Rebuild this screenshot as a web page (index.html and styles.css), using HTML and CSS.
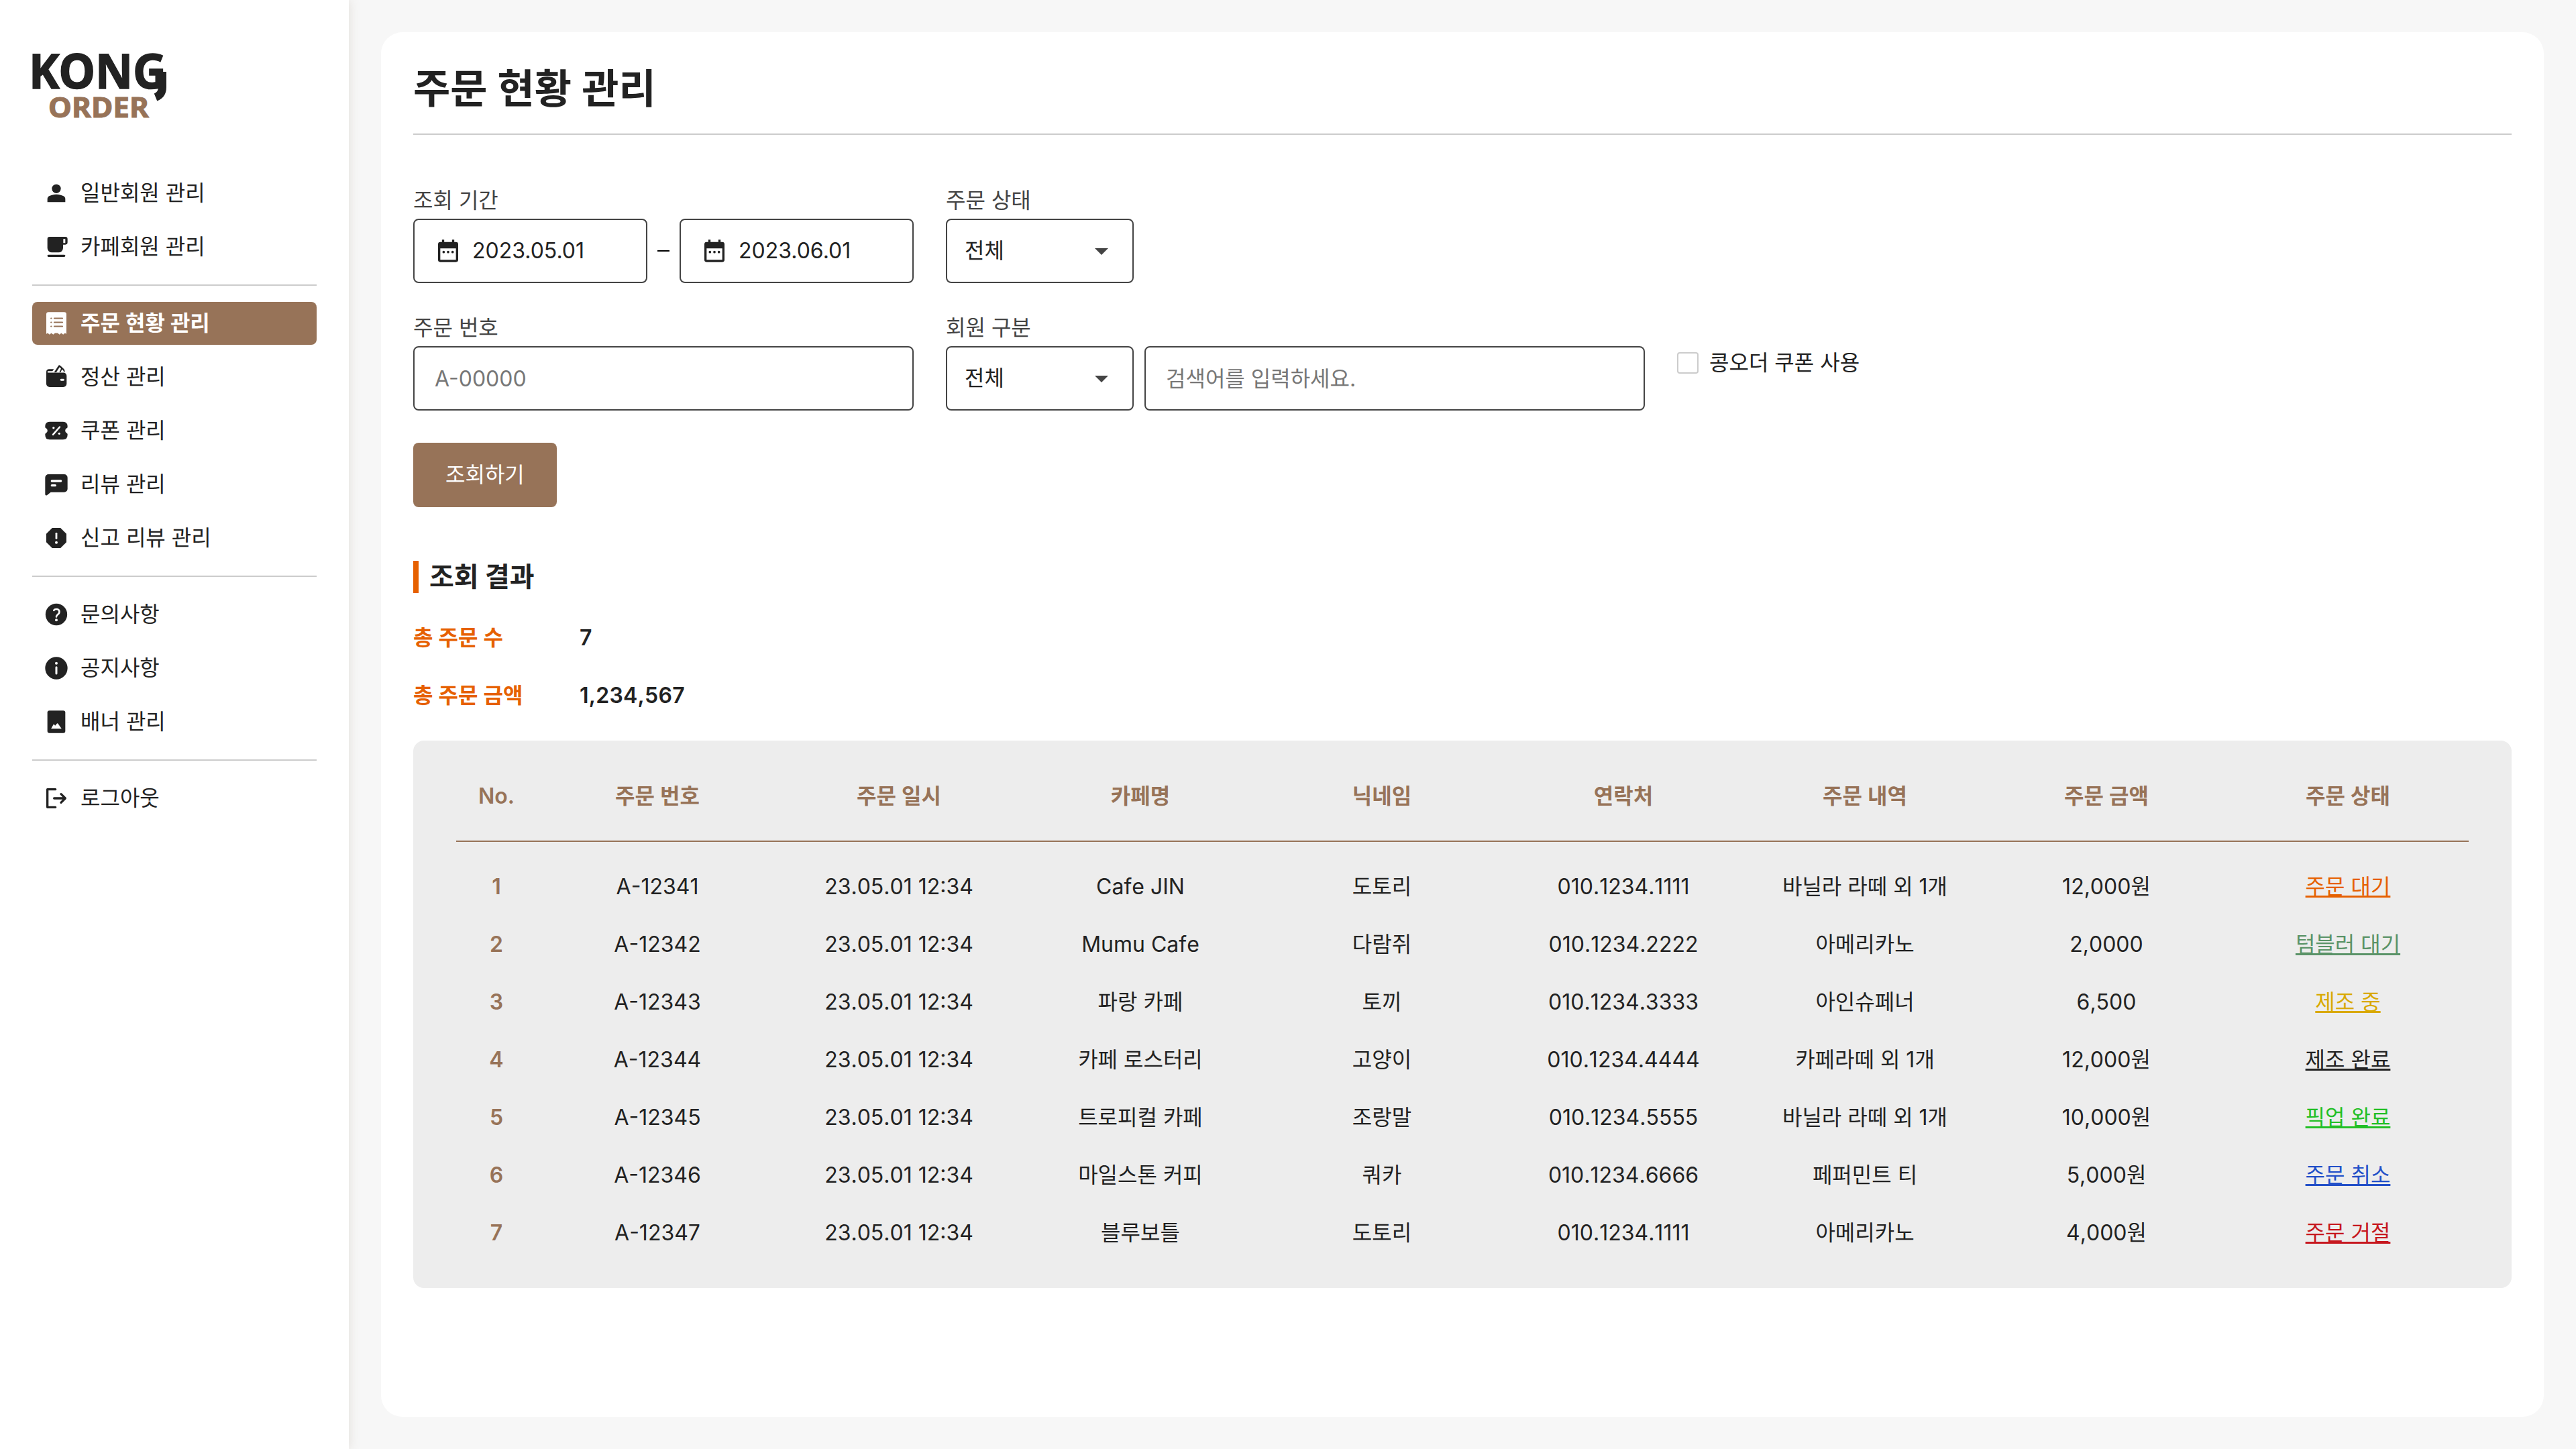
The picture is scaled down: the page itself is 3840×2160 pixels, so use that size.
FILE: index.html
```html
<!DOCTYPE html>
<html lang="ko">
<head>
  <meta charset="UTF-8" />
  <meta name="viewport" content="width=device-width, initial-scale=1.0"/>
  <title>KONG ORDER - 주문 현황 관리</title>
  <link rel="stylesheet" href="styles.css">
</head>
<body>
  <aside class="sidebar">
    <svg class="logo" viewBox="0 0 204 100" role="img" aria-label="KONG ORDER">
      <text class="logo-kong" x="-5" y="52" textLength="205" lengthAdjust="spacingAndGlyphs">KONG</text>
      <path class="logo-tail" d="M194 27v23q0 11-10 15"/>
      <text class="logo-order" x="24" y="95" textLength="150" lengthAdjust="spacingAndGlyphs">ORDER</text>
    </svg>

    <nav>
      <ul class="menu">
        <li><a href="#">
          <svg class="icon" viewBox="0 0 24 24"><circle cx="12" cy="8" r="4"/><path d="M4 20v-2.800c0-1.100.6-2.100 1.600-2.650C7.600 13.500 9.800 13 12 13s4.400.5 6.400 1.550c1 .55 1.600 1.550 1.600 2.650V20z"/></svg>
          일반회원 관리</a></li>
        <li><a href="#">
          <svg class="icon" viewBox="0 0 24 24"><path fill-rule="evenodd" d="M8 17a4 4 0 0 1-4-4V5a2 2 0 0 1 2-2h14a2 2 0 0 1 2 2v3a2 2 0 0 1-2 2h-2v3a4 4 0 0 1-4 4zM18.200 8.500H20V5h-1.800z"/><rect x="4" y="19" width="16" height="2" rx="1"/></svg>
          카페회원 관리</a></li>
      </ul>
      <ul class="menu">
        <li><a class="active" href="#">
          <svg class="icon" viewBox="0 0 24 24"><path d="M3 4a2 2 0 0 1 2-2h14a2 2 0 0 1 2 2v17.500l-1.300-.8-1.600 1.300-1.700-1.300-1.600 1.300-1.600-1.300-2.400 0-1.600 1.300-1.700-1.300-1.600 1.300-1.600-1.300-1.300.8z"/><path class="cut" d="M10.200 7.500h7.200M10.200 11.100h7.200M10.200 14.700h7.200M7.300 7.500h.2M7.300 11.100h.2M7.300 14.700h.2" stroke-width="1.300"/></svg>
          주문 현황 관리</a></li>
        <li><a href="#">
          <svg class="icon" viewBox="0 0 24 24"><path d="M3 7.200v10.800a3 3 0 0 0 3 3h12.200a3 3 0 0 0 3-3v-7a3 3 0 0 0-2.700-2.900H4.500A.8.8 0 0 1 4.500 6.700h4L9.800 5H5.500A2.500 2.500 0 0 0 3 7.200zM10 7.800 14 1.700q.6-.7 1.300-.1l1.400 1.300 2.300 2.200q.7.8.4 2.700h-.8q.2-1.300-.7-2l-.8-.7-1.300 2.700h-1.200L16.200 4.500l-1.300-1.300-3 4.600z"/><rect class="hole" x="15.500" y="13.700" width="3.600" height="1.700" rx=".85"/></svg>
          정산 관리</a></li>
        <li><a href="#">
          <svg class="icon" viewBox="0 0 24 24"><path d="M6 4h12q4 0 4 4.200v.7q0 .5-.5.7a2.600 2.600 0 0 0 0 4.800q.5.200.5.700v.700q0 4.200-4 4.200H6q-4 0-4-4.200v-.7q0-.5.500-.7a2.600 2.600 0 0 0 0-4.800Q2 9.400 2 8.900v-.7Q2 4 6 4z"/><path class="cut" d="M9 15.500l6-6.800" stroke-width="1.500"/><circle class="hole" cx="9.500" cy="9.500" r="1"/><circle class="hole" cx="14.600" cy="14.600" r="1"/></svg>
          쿠폰 관리</a></li>
        <li><a href="#">
          <svg class="icon" viewBox="0 0 24 24"><path d="M5 3h14a3 3 0 0 1 3 3v10a3 3 0 0 1-3 3H7l-3.400 2.700Q2 22.500 2 20.700V6a3 3 0 0 1 3-3z"/><path class="cut" d="M8 9h8M8 13h3" stroke-width="2"/></svg>
          리뷰 관리</a></li>
        <li><a href="#">
          <svg class="icon" viewBox="0 0 24 24"><path d="M8.300 3h7.400L21 8.300v7.400L15.700 21H8.300L3 15.700V8.300z"/><path class="cut" d="M12 8v4.200" stroke-width="1.700"/><circle class="hole" cx="12" cy="16" r="1.200"/></svg>
          신고 리뷰 관리</a></li>
      </ul>
      <ul class="menu">
        <li><a href="#">
          <svg class="icon" viewBox="0 0 24 24"><circle cx="12" cy="12" r="9.700"/><path class="cut" d="M9.800 8.300Q10.500 7.200 12 7.200q2.700 0 2.700 2.500 0 1.200-1.400 2.300T12 14" stroke-width="1.600"/><circle class="hole" cx="12" cy="17" r="1.200"/></svg>
          문의사항</a></li>
        <li><a href="#">
          <svg class="icon" viewBox="0 0 24 24"><circle cx="12" cy="12" r="10"/><path class="cut" d="M12 11.200v5.600" stroke-width="1.800"/><circle class="hole" cx="12" cy="7.700" r="1.200"/></svg>
          공지사항</a></li>
        <li><a href="#">
          <svg class="icon" viewBox="0 0 24 24"><rect x="4" y="2" width="16" height="20" rx="1.800"/><path class="hole" d="M7.300 18.200l2-3.700q.4-.7.900 0l.7.900 1.700-1.900q.5-.5.900.2l3.200 4.500z"/></svg>
          배너 관리</a></li>
      </ul>
      <ul class="menu">
        <li><a href="#">
          <svg class="icon line" viewBox="0 0 24 24"><path d="M11.200 4H4v16h7.200M10 12h10M16.200 8.200 20 12l-3.800 3.800"/></svg>
          로그아웃</a></li>
      </ul>
    </nav>
  </aside>

  <main class="content">
    <section class="card">
      <h1>주문 현황 관리</h1>

      <form class="search">
        <div class="search-row">
          <div class="field">
            <label>조회 기간</label>
            <div class="period">
              <div class="box date">
                <svg class="icon" viewBox="0 0 24 24"><path fill-rule="evenodd" d="M6.500 2h2v2h7V2h2v2H19a2 2 0 0 1 2 2v14a2 2 0 0 1-2 2H5a2 2 0 0 1-2-2V6a2 2 0 0 1 2-2h1.500zM5 9.800V20h14V9.800z"/><circle cx="8" cy="13" r="1.100"/><circle cx="12" cy="13" r="1.100"/><circle cx="16" cy="13" r="1.100"/></svg>
                2023.05.01
              </div>
              <span class="dash"></span>
              <div class="box date">
                <svg class="icon" viewBox="0 0 24 24"><path fill-rule="evenodd" d="M6.500 2h2v2h7V2h2v2H19a2 2 0 0 1 2 2v14a2 2 0 0 1-2 2H5a2 2 0 0 1-2-2V6a2 2 0 0 1 2-2h1.500zM5 9.800V20h14V9.800z"/><circle cx="8" cy="13" r="1.100"/><circle cx="12" cy="13" r="1.100"/><circle cx="16" cy="13" r="1.100"/></svg>
                2023.06.01
              </div>
            </div>
          </div>
          <div class="field">
            <label>주문 상태</label>
            <div class="box select">전체 <svg class="arrow" viewBox="0 0 20 10"><path d="M0 0h20L10 10z"/></svg></div>
          </div>
        </div>

        <div class="search-row">
          <div class="field">
            <label>주문 번호</label>
            <input class="box text" type="text" placeholder="A-00000">
          </div>
          <div class="field">
            <label>회원 구분</label>
            <div class="member">
              <div class="box select">전체 <svg class="arrow" viewBox="0 0 20 10"><path d="M0 0h20L10 10z"/></svg></div>
              <input class="box text" type="text" placeholder="검색어를 입력하세요.">
            </div>
          </div>
          <div class="coupon">
            <span class="checkbox"></span>
            콩오더 쿠폰 사용
          </div>
        </div>

        <button class="search-button" type="button">조회하기</button>
      </form>

      <h2>조회 결과</h2>
      <dl class="summary">
        <dt>총 주문 수</dt>
        <dd>7</dd>
        <dt>총 주문 금액</dt>
        <dd>1,234,567</dd>
      </dl>

      <div class="orders">
        <div class="row head">
          <span>No.</span><span>주문 번호</span><span>주문 일시</span><span>카페명</span><span>닉네임</span><span>연락처</span><span>주문 내역</span><span>주문 금액</span><span>주문 상태</span>
        </div>
        <div class="row">
          <b>1</b><span>A-12341</span><span>23.05.01 12:34</span><span>Cafe JIN</span><span>도토리</span><span>010.1234.1111</span><span>바닐라 라떼 외 1개</span><span>12,000원</span><a class="wait" href="#">주문 대기</a>
        </div>
        <div class="row">
          <b>2</b><span>A-12342</span><span>23.05.01 12:34</span><span>Mumu Cafe</span><span>다람쥐</span><span>010.1234.2222</span><span>아메리카노</span><span>2,0000</span><a class="tumbler" href="#">텀블러 대기</a>
        </div>
        <div class="row">
          <b>3</b><span>A-12343</span><span>23.05.01 12:34</span><span>파랑 카페</span><span>토끼</span><span>010.1234.3333</span><span>아인슈페너</span><span>6,500</span><a class="making" href="#">제조 중</a>
        </div>
        <div class="row">
          <b>4</b><span>A-12344</span><span>23.05.01 12:34</span><span>카페 로스터리</span><span>고양이</span><span>010.1234.4444</span><span>카페라떼 외 1개</span><span>12,000원</span><a class="made" href="#">제조 완료</a>
        </div>
        <div class="row">
          <b>5</b><span>A-12345</span><span>23.05.01 12:34</span><span>트로피컬 카페</span><span>조랑말</span><span>010.1234.5555</span><span>바닐라 라떼 외 1개</span><span>10,000원</span><a class="pickup" href="#">픽업 완료</a>
        </div>
        <div class="row">
          <b>6</b><span>A-12346</span><span>23.05.01 12:34</span><span>마일스톤 커피</span><span>쿼카</span><span>010.1234.6666</span><span>페퍼민트 티</span><span>5,000원</span><a class="cancel" href="#">주문 취소</a>
        </div>
        <div class="row">
          <b>7</b><span>A-12347</span><span>23.05.01 12:34</span><span>블루보틀</span><span>도토리</span><span>010.1234.1111</span><span>아메리카노</span><span>4,000원</span><a class="reject" href="#">주문 거절</a>
        </div>
      </div>
    </section>
  </main>
</body>
</html>
```
FILE: styles.css
```css
* {
  box-sizing: border-box;
  margin: 0;
  padding: 0;
}

body {
  display: flex;
  height: 2160px;
  background-color: #f7f7f7;
  color: #222;
  font-family: Inter, "Noto Sans CJK KR", sans-serif;
  font-size: 32px;
  line-height: 38px;
}

a {
  color: inherit;
}

/* Sidebar */
.sidebar {
  flex: none;
  width: 520px;
  padding: 80px 48px 0;
  background-color: #fff;
  box-shadow: 0 0 16px rgba(130, 105, 80, 0.18);
}

.logo {
  display: block;
  width: 204px;
  height: 100px;
  margin-bottom: 76px;
  overflow: visible;
  font-family: "Noto Sans", sans-serif;
  font-weight: 700;
}

.logo-kong {
  fill: #222;
  stroke: #222;
  stroke-width: 1.5px;
  font-size: 71px;
}

.logo-tail {
  fill: none;
  stroke: #222;
  stroke-width: 12px;
}

.logo-order {
  fill: #977358;
  stroke: #977358;
  stroke-width: 1px;
  font-size: 42px;
}

.menu {
  display: flex;
  flex-direction: column;
  gap: 16px;
  list-style: none;
}

.menu + .menu {
  margin-top: 24px;
  padding-top: 24px;
  border-top: 2px solid #ccc;
}

.menu a {
  --bg: #fff;
  display: flex;
  align-items: center;
  gap: 16px;
  height: 64px;
  padding: 0 16px;
  border-radius: 8px;
  text-decoration: none;
}

.menu a.active {
  --bg: #977358;
  background-color: #977358;
  color: #fff;
  font-weight: 700;
  word-spacing: 0.5px;
}

.icon {
  flex: none;
  width: 40px;
  height: 40px;
  fill: currentColor;
}

.icon .hole {
  fill: var(--bg);
}

.icon .cut {
  fill: none;
  stroke: var(--bg);
  stroke-linecap: round;
}

.icon.line {
  fill: none;
  stroke: currentColor;
  stroke-width: 2;
  stroke-linecap: round;
  stroke-linejoin: round;
}

/* Content */
.content {
  flex: 1;
  padding: 48px;
}

.card {
  height: 2064px;
  padding: 48px;
  border-radius: 32px;
  background-color: #fff;
}

h1 {
  height: 105px;
  border-bottom: 2px solid #ccc;
  font-size: 60px;
  line-height: 72px;
  word-spacing: 1px;
}

/* Search form */
.search {
  display: flex;
  flex-direction: column;
  align-items: flex-start;
  gap: 48px;
  margin-top: 79px;
}

.search-row,
.period,
.member {
  display: flex;
}

.search-row {
  gap: 48px;
}

.field {
  display: flex;
  flex-direction: column;
  gap: 8px;
}

.field label {
  color: #444;
}

.period {
  align-items: center;
  gap: 15px;
}

.member {
  gap: 16px;
}

.dash {
  width: 18px;
  height: 2px;
  background-color: #000;
}

.box {
  display: flex;
  align-items: center;
  height: 96px;
  border: 2px solid #444;
  border-radius: 8px;
  background-color: #fff;
  color: #222;
  font: inherit;
}

.date {
  gap: 16px;
  width: 349px;
  padding: 0 30px;
}

.text {
  width: 746px;
  padding: 0 30px;
}

.text::placeholder {
  color: #777;
}

.select {
  justify-content: space-between;
  width: 280px;
  padding: 0 36px 0 26px;
}

.arrow {
  width: 20px;
  height: 10px;
  margin-top: 2px;
  fill: #444;
}

.coupon {
  display: flex;
  align-items: center;
  align-self: flex-start;
  gap: 16px;
  height: 38px;
  margin-top: 52px;
}

.checkbox {
  width: 32px;
  height: 32px;
  border: 2px solid #ccc;
  border-radius: 4px;
}

.search-button {
  height: 96px;
  padding: 0 48px;
  border: none;
  border-radius: 8px;
  background-color: #977358;
  color: #fff;
  font: inherit;
}

/* Result */
h2 {
  margin-top: 80px;
  padding-left: 16px;
  border-left: 8px solid #e66000;
  font-size: 40px;
  line-height: 48px;
}

.summary {
  display: grid;
  grid-template-columns: 200px auto;
  gap: 48px;
  margin: 48px 0;
  font-weight: 600;
  font-kerning: none;
}

.summary dt {
  color: #e66000;
}

.summary dd {
  letter-spacing: 0.25px;
}

.orders {
  display: flex;
  flex-direction: column;
  gap: 48px;
  padding: 64px 64px 63px;
  border-radius: 16px;
  background-color: #ededed;
  font-kerning: none;
}

.row {
  display: grid;
  grid-template-columns: 120px repeat(8, 360px);
  text-align: center;
}

.row b {
  color: #977358;
  font-weight: 600;
}

.row.head {
  padding-bottom: 47px;
  border-bottom: 2px solid #977358;
  color: #977358;
  font-weight: 600;
}

.wait { color: #e66000; }
.tumbler { color: #5a9367; }
.making { color: #d9a900; }
.made { color: #222; }
.pickup { color: #22bf26; }
.cancel { color: #2350c8; }
.reject { color: #c6171e; }
```
